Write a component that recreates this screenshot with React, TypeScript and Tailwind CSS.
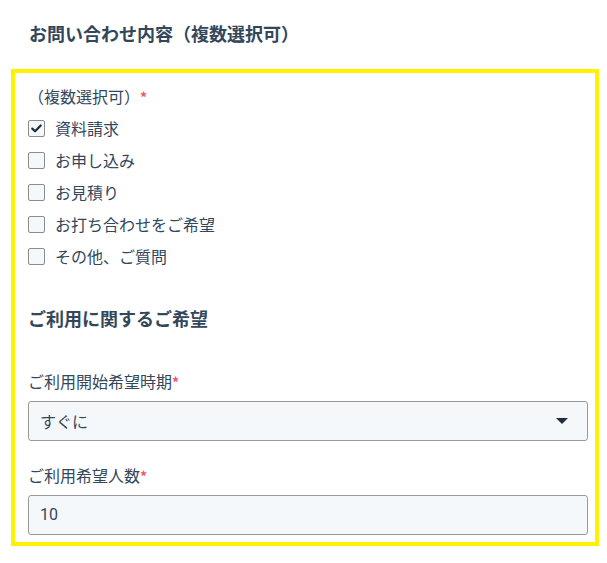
import { useState } from "react";

const options = [
  "資料請求",
  "お申し込み",
  "お見積り",
  "お打ち合わせをご希望",
  "その他、ご質問",
];

const Required = () => (
  <span className="text-[#f2545b] text-[14px] font-bold align-top relative top-[1px]">*</span>
);

const Checkbox = ({ checked }: { checked: boolean }) => (
  <span className="w-[17px] h-[17px] shrink-0 rounded-[2px] border border-[#8c8c8c] bg-[#f5f8fa] flex items-center justify-center">
    {checked && (
      <svg width="11" height="9" viewBox="0 0 11 9" fill="none">
        <path d="M1.3 4.6 L4.1 7.3 L9.7 1.5" stroke="#1f2d3d" strokeWidth="2.2" strokeLinecap="round" strokeLinejoin="round" />
      </svg>
    )}
  </span>
);

export default function App() {
  const [selected, setSelected] = useState<string[]>(["資料請求"]);

  const toggle = (name: string) =>
    setSelected((prev) => (prev.includes(name) ? prev.filter((n) => n !== name) : [...prev, name]));

  return (
    <div
      className="min-h-[563px] bg-white text-[#33475b] pt-[21px]"
      style={{ fontFamily: '"Noto Sans CJK JP", "Noto Sans", sans-serif' }}
    >
      {/* Section title */}
      <h2 className="pl-[29px] text-[18px] leading-[24px] font-bold">お問い合わせ内容（複数選択可）</h2>

      {/* Highlighted form block */}
      <div className="mt-[24px] ml-[11px] w-[588px] border-4 border-[#fff200] pl-[13px] pr-[7px] pt-[11px] pb-[7px]">
        <div className="text-[16px] leading-[24px]">
          （複数選択可）<Required />
        </div>

        <ul className="mt-[4px]">
          {options.map((name) => (
            <li key={name}>
              <label
                className="h-[32px] flex items-center gap-[10px] cursor-pointer"
                onClick={() => toggle(name)}
              >
                <Checkbox checked={selected.includes(name)} />
                <span className="text-[16px] leading-[24px]">{name}</span>
              </label>
            </li>
          ))}
        </ul>

        <h3 className="mt-[34px] text-[18px] leading-[24px] font-bold">ご利用に関するご希望</h3>

        <div className="mt-[39px] text-[16px] leading-[24px]">
          ご利用開始希望時期<Required />
        </div>
        <div className="mt-[8px] h-10 rounded-[3px] border border-[#999999] bg-[#f5f8fa] flex items-center justify-between pl-[11px] pr-[19px]">
          <span className="text-[16px]">すぐに</span>
          <svg width="12" height="6" viewBox="0 0 12 6">
            <path d="M0 0 H12 L6 6 Z" fill="#1f2d3d" />
          </svg>
        </div>

        <div className="mt-[22px] text-[16px] leading-[24px]">
          ご利用希望人数<Required />
        </div>
        <div className="mt-[8px] h-10 rounded-[3px] border border-[#999999] bg-[#f5f8fa] flex items-center pl-[11px]">
          <span className="text-[16px]" style={{ fontFamily: 'Roboto, "Noto Sans CJK JP", sans-serif' }}>
            10
          </span>
        </div>
      </div>
    </div>
  );
}
